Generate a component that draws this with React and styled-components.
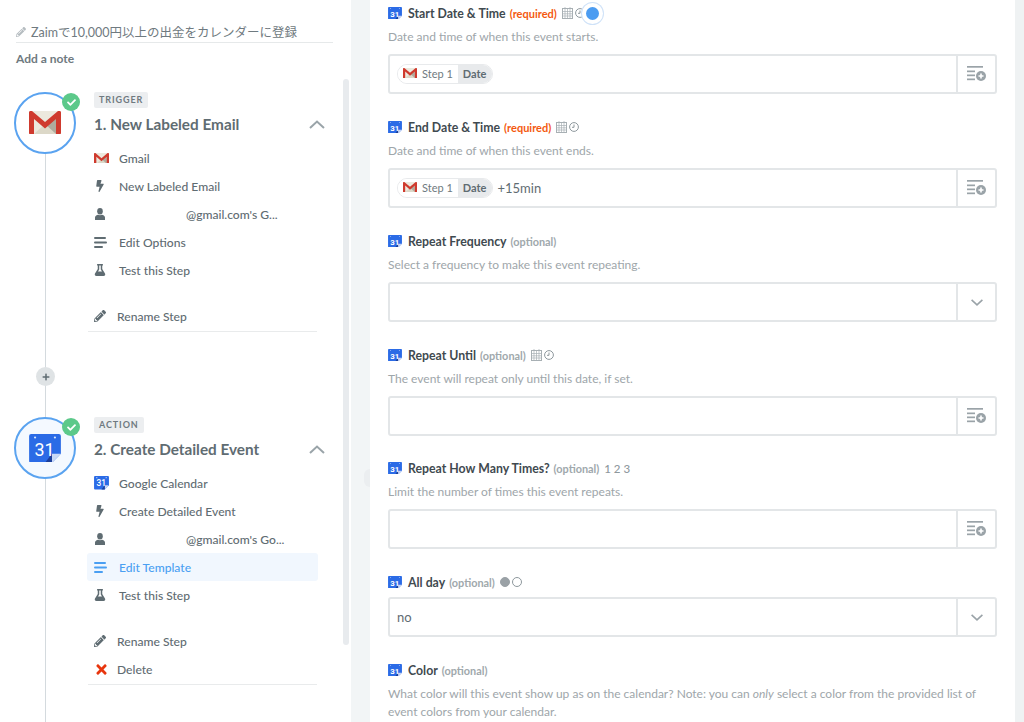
import React from 'react';
import styled, { createGlobalStyle } from 'styled-components';
import { FaBolt, FaFlask, FaPencilAlt, FaTimes, FaCheck, FaPlus } from 'react-icons/fa';

const GlobalStyle = createGlobalStyle`
  html, body {
    margin: 0;
    padding: 0;
    height: 722px;
    overflow: hidden;
    background: #fff;
    font-family: Lato, 'Noto Sans CJK JP', sans-serif;
    color: #5f6c72;
  }
  * { box-sizing: border-box; }
`;

const Page = styled.div`
  display: grid;
  grid-template-columns: 351px 19px 645px 9px;
  height: 722px;
  overflow: hidden;
`;

const Sidebar = styled.aside`
  padding: 24px 0 0 16px;
  overflow: hidden;
  position: relative;
`;

const ZapName = styled.div`
  display: flex;
  align-items: center;
  gap: 5px;
  width: 317px;
  height: 19px;
  font-size: 12.5px;
  color: #6f7a80;
  border-bottom: 1px solid #e6e9ea;
  padding-bottom: 3px;
  svg { color: #b5bcc0; font-size: 10px; }
`;

const AddNote = styled.div`
  margin-top: 8px;
  font-size: 12px;
  font-weight: 700;
  color: #6f7a80;
  line-height: 16px;
`;

const SideScroll = styled.div`
  position: absolute;
  left: 343px;
  top: 79px;
  width: 6px;
  height: 566px;
  background: #e8ebee;
  border-radius: 3px;
`;

const Timeline = styled.div`
  position: absolute;
  left: 44.5px;
  top: 150px;
  bottom: 0;
  width: 1.5px;
  background: #d4dade;
`;

const StepBlock = styled.section`
  display: grid;
  grid-template-columns: 78px 231px;
  margin-top: ${(p) => p.$top}px;
  position: relative;
`;

const Badge = styled.div`
  width: 62px;
  height: 62px;
  margin-left: -2px;
  border-radius: 50%;
  border: 2px solid #5aa3f0;
  background: ${(p) => (p.$tint ? '#f4f9ff' : '#fff')};
  display: flex;
  align-items: center;
  justify-content: center;
  position: relative;
  z-index: 1;
`;

const Check = styled.span`
  position: absolute;
  top: -1px;
  right: -6px;
  width: 18px;
  height: 18px;
  border-radius: 50%;
  background: #5cc98a;
  color: #fff;
  display: flex;
  align-items: center;
  justify-content: center;
  font-size: 9px;
`;

const StepBody = styled.div`
  min-width: 0;
`;

const Tag = styled.div`
  width: fit-content;
  height: 16px;
  padding: 0 5px;
  background: #eceef0;
  border-radius: 2px;
  font-size: 9px;
  font-weight: 700;
  letter-spacing: 0.9px;
  line-height: 16px;
  color: #6f7a80;
`;

const StepHead = styled.div`
  display: flex;
  justify-content: space-between;
  align-items: center;
  width: 231px;
  margin-top: 6px;
  height: 20px;
  font-size: 15.3px;
  font-weight: 700;
  color: #5f6c72;
`;

const Items = styled.ul`
  list-style: none;
  margin: 10px 0 0 -7px;
  padding: 0;
  width: 231px;
`;

const Item = styled.li`
  display: flex;
  align-items: center;
  height: 28px;
  padding-left: 7px;
  font-size: 12.1px;
  font-weight: 500;
  color: ${(p) => (p.$active ? '#4a9ff2' : '#5f6c72')};
  background: ${(p) => (p.$active ? '#f1f7fe' : 'transparent')};
  border-radius: 3px;
  margin-top: ${(p) => p.$gap || 0}px;
  svg { flex: none; }
`;

const ItemIcon = styled.span`
  width: ${(p) => (p.$tight ? 23 : 25)}px;
  flex: none;
  display: flex;
  align-items: center;
  font-size: 12px;
  color: ${(p) => (p.$red ? '#e8360e' : 'inherit')};
`;

const Masked = styled.span`
  margin-left: 67px;
`;

const Rule = styled.div`
  width: 229px;
  height: 1px;
  margin-top: 1px;
  background: #e9ebec;
  margin-left: -6px;
`;

const AddStep = styled.div`
  position: absolute;
  left: 36px;
  top: 367px;
  width: 19px;
  height: 19px;
  border-radius: 50%;
  background: #dfe3e5;
  color: #5f6c72;
  display: flex;
  align-items: center;
  justify-content: center;
  font-size: 8px;
  z-index: 1;
`;

const Gutter = styled.div`
  background: #f2f5f6;
  position: relative;
`;

const Handle = styled.span`
  position: absolute;
  right: 0;
  top: 469px;
  width: 6px;
  height: 18px;
  border-radius: 9px 0 0 9px;
  background: #ebeef0;
`;

const Form = styled.main`
  padding: 0 18px;
  overflow: hidden;
`;

const Field = styled.div`
  margin-top: ${(p) => p.$top}px;
`;

const LabelRow = styled.div`
  display: flex;
  align-items: center;
  height: 16px;
  font-size: 12.3px;
  font-weight: 700;
  color: #3f4a50;
  white-space: nowrap;
`;

const LabelText = styled.span`
  margin-left: 6px;
`;

const Req = styled.span`
  margin-left: 4px;
  font-size: 11px;
  font-weight: 700;
  color: #f4590f;
`;

const Opt = styled.span`
  margin-left: 4px;
  font-size: 10.9px;
  font-weight: 700;
  color: #a0a8ac;
`;

const Nums = styled.span`
  margin-left: 5px;
  font-size: 11.5px;
  letter-spacing: 0.5px;
  word-spacing: -1px;
  font-weight: 500;
  color: #8e989d;
`;

const Hint = styled.p`
  margin: 7px 0 0;
  font-size: 12px;
  line-height: 18px;
  color: #9ea6aa;
  em { font-style: italic; }
`;

const Box = styled.div`
  display: flex;
  width: 609px;
  height: 40px;
  margin-top: ${(p) => (p.$tight ? 7 : 8)}px;
  border: 2px solid #e3e6e8;
  border-radius: 3px;
`;

const BoxValue = styled.div`
  flex: 1;
  display: flex;
  align-items: center;
  gap: 4px;
  padding-left: 7px;
  font-size: 13px;
  color: #5f6c72;
`;

const BoxSide = styled.div`
  width: 39px;
  border-left: 2px solid #e3e6e8;
  display: flex;
  align-items: center;
  justify-content: center;
  color: #9aa3a8;
`;

const Pill = styled.span`
  display: inline-flex;
  align-items: stretch;
  height: 20px;
  border-radius: 10px;
  overflow: hidden;
  border: 1px solid #e8eaec;
  font-size: 11px;
`;

const PillStep = styled.span`
  display: flex;
  align-items: center;
  gap: 5px;
  padding: 0 5px 1px;
  color: #6f7a80;
  background: #fff;
`;

const PillKey = styled.span`
  display: flex;
  align-items: center;
  padding: 0 6px 1px 5px;
  background: #e8eaec;
  font-weight: 700;
  color: #5f6c72;
`;

const IconGroup = styled.span`
  display: inline-flex;
  align-items: center;
  gap: 2px;
  margin-left: 5px;
  position: relative;
`;

const Focus = styled.span`
  display: inline-block;
  width: 13px;
  height: 13px;
  margin-left: -1px;
  border-radius: 50%;
  background: #4c9cf1;
  box-shadow: 0 0 0 4px #fff, 0 0 0 5px #cfe2f8;
`;

const Dot = styled.span`
  width: 10px;
  height: 10px;
  border-radius: 50%;
  background: ${(p) => (p.$on ? '#9aa1a6' : '#fff')};
  border: 1px solid ${(p) => (p.$on ? '#9aa1a6' : '#8e989d')};
`;

const Scrollbar = styled.div`
  background: #eff2f3;
`;

const GmailIcon = ({ size = 15 }) => (
  <svg width={size} height={size * 0.72} viewBox="0 0 32 23">
    <rect x="0" y="0" width="32" height="23" rx="1" fill="#ece9de" />
    <path d="M5 23 16 13l11 10z" fill="#dcd8c8" />
    <path d="M17 14 27 6v17z" fill="#aeab9e" />
    <path d="M0 1.500C0 .5.7 0 1.600 0H3l13 11L29 0h1.400c.9 0 1.600.5 1.600 1.500V22c0 .6-.4 1-1 1h-4V8L16 17.500 5 8v15H1c-.6 0-1-.4-1-1z" fill="#cf3a2e" />
  </svg>
);

const CalendarIcon = ({ size = 14 }) => (
  <svg width={size} height={size * 0.9} viewBox="0 0 32 29">
    <path d="M2 0h28a2 2 0 0 1 2 2v18l-9 9H2a2 2 0 0 1-2-2V2a2 2 0 0 1 2-2z" fill="#2b6be6" />
    <path d="M32 20l-9 9v-9z" fill="#c9d8f5" />
    <path d="M23 20v9h-7l7-9z" fill="#1c3f9a" />
    <circle cx="6" cy="3.500" r="1.100" fill="#dce8fb" />
    <circle cx="26" cy="3.500" r="1.100" fill="#dce8fb" />
    <text x="15.500" y="22" textAnchor="middle" fontFamily="Roboto, sans-serif" fontSize="18" fill="#fff">31</text>
  </svg>
);

const DateIcon = () => (
  <svg width="11" height="12" viewBox="0 0 11 12" fill="none" stroke="#a8b0b4" strokeWidth="1">
    <rect x=".5" y="1.500" width="10" height="10" />
    <path d="M.5 4.500h10M.5 6.800h10M.5 9h10M3 1.500v10M5.500 1.500v10M8 1.500v10M3 0v2M8 0v2" strokeWidth=".7" />
  </svg>
);

const ClockIcon = () => (
  <svg width="10" height="10" viewBox="0 0 10 10" fill="none" stroke="#8e989d" strokeWidth="1">
    <circle cx="5" cy="5" r="4.400" />
    <path d="M5 2.500v2.800H3" />
  </svg>
);

const InsertIcon = () => (
  <svg width="20" height="16" viewBox="0 0 20 16" fill="#9aa3a8">
    <rect x="0" y="0" width="16" height="1.700" />
    <rect x="0" y="4.500" width="8" height="1.700" />
    <rect x="0" y="8.500" width="8" height="1.700" />
    <rect x="0" y="12.500" width="8" height="1.700" />
    <circle cx="14" cy="10" r="5" />
    <path d="M13.200 7.500h1.600v1.700h1.700v1.600h-1.700v1.700h-1.600v-1.700h-1.700V9.200h1.700z" fill="#fff" />
  </svg>
);

const ChevronIcon = () => (
  <svg width="12" height="7" viewBox="0 0 12 7" fill="none" stroke="#9aa3a8" strokeWidth="1.600">
    <path d="M.6.800 6 5.800 11.400.8" />
  </svg>
);

const CollapseIcon = () => (
  <svg width="16" height="9" viewBox="0 0 16 9" fill="none" stroke="#9aa4a9" strokeWidth="2">
    <path d="M1 8l7-6.500L15 8" />
  </svg>
);

const LinesIcon = () => (
  <svg width="13" height="11" viewBox="0 0 13 11" fill="currentColor">
    <rect x="0" y="0" width="12" height="2" rx="1" />
    <rect x="0" y="4.500" width="13" height="2" rx="1" />
    <rect x="0" y="9" width="9" height="2" rx="1" />
  </svg>
);

const PersonIcon = () => (
  <svg width="10" height="12" viewBox="0 0 10 12" fill="currentColor" style={{ marginLeft: 1 }}>
    <ellipse cx="5" cy="3.200" rx="2.800" ry="3.200" />
    <path d="M0 12V9.500C0 8 1.500 7 3.200 6.700c1 .6 2.600.6 3.600 0C8.500 7 10 8 10 9.500V12z" />
  </svg>
);

const StepPill = () => (
  <Pill>
    <PillStep><GmailIcon size={14} />Step 1</PillStep>
    <PillKey>Date</PillKey>
  </Pill>
);

const FieldBlock = ({ top, label, note, extra, hint, side, children }) => (
  <Field $top={top}>
    <LabelRow>
      <CalendarIcon />
      <LabelText>{label}</LabelText>
      {note}
      {extra}
    </LabelRow>
    {hint && <Hint>{hint}</Hint>}
    {side && (
      <Box $tight={!hint}>
        <BoxValue>{children}</BoxValue>
        <BoxSide>{side === 'select' ? <ChevronIcon /> : <InsertIcon />}</BoxSide>
      </Box>
    )}
  </Field>
);

const StepCard = ({ top, tag, title, icon, tint, items, extras }) => (
  <StepBlock $top={top}>
    <Badge $tint={tint}>
      {icon}
      <Check><FaCheck /></Check>
    </Badge>
    <StepBody>
      <Tag>{tag}</Tag>
      <StepHead>{title}<CollapseIcon /></StepHead>
      <Items>
        {items}
        {extras}
      </Items>
      <Rule />
    </StepBody>
  </StepBlock>
);

export default function App() {
  return (
    <Page>
      <GlobalStyle />
      <Sidebar>
        <ZapName><FaPencilAlt />Zaimで10,000円以上の出金をカレンダーに登録</ZapName>
        <AddNote>Add a note</AddNote>
        <Timeline />
        <AddStep><FaPlus /></AddStep>
        <SideScroll />
        <StepCard
          top={25}
          tag="TRIGGER"
          title="1. New Labeled Email"
          icon={<GmailIcon size={32} />}
          items={
            <>
              <Item><ItemIcon><GmailIcon size={15} /></ItemIcon>Gmail</Item>
              <Item><ItemIcon><FaBolt /></ItemIcon>New Labeled Email</Item>
              <Item><ItemIcon><PersonIcon /></ItemIcon><Masked>@gmail.com's G...</Masked></Item>
              <Item><ItemIcon><LinesIcon /></ItemIcon>Edit Options</Item>
              <Item><ItemIcon><FaFlask /></ItemIcon>Test this Step</Item>
            </>
          }
          extras={<Item $gap={18}><ItemIcon $tight><FaPencilAlt /></ItemIcon>Rename Step</Item>}
        />
        <StepCard
          top={85}
          tag="ACTION"
          title="2. Create Detailed Event"
          tint
          icon={<CalendarIcon size={32} />}
          items={
            <>
              <Item><ItemIcon><CalendarIcon size={15} /></ItemIcon>Google Calendar</Item>
              <Item><ItemIcon><FaBolt /></ItemIcon>Create Detailed Event</Item>
              <Item><ItemIcon><PersonIcon /></ItemIcon><Masked>@gmail.com's Go...</Masked></Item>
              <Item $active><ItemIcon><LinesIcon /></ItemIcon>Edit Template</Item>
              <Item><ItemIcon><FaFlask /></ItemIcon>Test this Step</Item>
            </>
          }
          extras={
            <>
              <Item $gap={18}><ItemIcon $tight><FaPencilAlt /></ItemIcon>Rename Step</Item>
              <Item><ItemIcon $tight $red><FaTimes size={15} /></ItemIcon>Delete</Item>
            </>
          }
        />
      </Sidebar>
      <Gutter><Handle /></Gutter>
      <Form>
        <FieldBlock
          top={5}
          label="Start Date & Time"
          note={<Req>(required)</Req>}
          extra={<IconGroup><DateIcon /><ClockIcon /><Focus /></IconGroup>}
          hint="Date and time of when this event starts."
          side="insert"
        >
          <StepPill />
        </FieldBlock>
        <FieldBlock
          top={25}
          label="End Date & Time"
          note={<Req>(required)</Req>}
          extra={<IconGroup><DateIcon /><ClockIcon /></IconGroup>}
          hint="Date and time of when this event ends."
          side="insert"
        >
          <StepPill />+15min
        </FieldBlock>
        <FieldBlock
          top={25}
          label="Repeat Frequency"
          note={<Opt>(optional)</Opt>}
          hint="Select a frequency to make this event repeating."
          side="select"
        />
        <FieldBlock
          top={25}
          label="Repeat Until"
          note={<Opt>(optional)</Opt>}
          extra={<IconGroup><DateIcon /><ClockIcon /></IconGroup>}
          hint="The event will repeat only until this date, if set."
          side="insert"
        />
        <FieldBlock
          top={24}
          label="Repeat How Many Times?"
          note={<Opt>(optional)</Opt>}
          extra={<Nums>1 2 3</Nums>}
          hint="Limit the number of times this event repeats."
          side="insert"
        />
        <FieldBlock
          top={25}
          label="All day"
          note={<Opt>(optional)</Opt>}
          extra={<IconGroup><Dot $on /><Dot /></IconGroup>}
          side="select"
        >
          no
        </FieldBlock>
        <FieldBlock
          top={25}
          label="Color"
          note={<Opt>(optional)</Opt>}
          hint={<>What color will this event show up as on the calendar? Note: you can <em>only</em> select a color from the provided list of event colors from your calendar.</>}
        />
      </Form>
      <Scrollbar />
    </Page>
  );
}
